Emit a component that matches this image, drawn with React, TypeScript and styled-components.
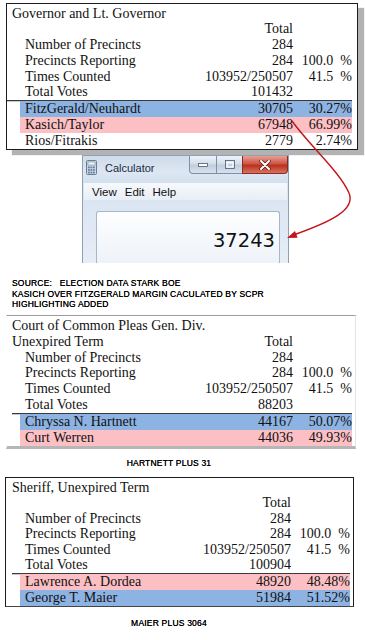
import styled, { createGlobalStyle } from "styled-components";

const GlobalStyle = createGlobalStyle`
  html, body {
    margin: 0;
    padding: 0;
    background: #fff;
  }
  body {
    font-family: "Liberation Serif", "Times New Roman", serif;
    color: #111;
  }
`;

const Page = styled.div`
  position: relative;
  width: 365px;
  display: flex;
  flex-direction: column;
  padding-top: 3px;
`;

type Look = "frame" | "open" | "thin";

const Box = styled.div<{ $look: Look }>`
  box-sizing: border-box;
  display: flex;
  flex-direction: column;
  ${(p) =>
    p.$look === "frame" &&
    `
    margin-left: 6px;
    width: 352px;
    border: 1px solid #1c1c1c;
    padding: 1.5px 5px 0 0;
    box-shadow: 6px 5px 1px #b3b3b3;
  `}
  ${(p) =>
    p.$look === "open" &&
    `
    margin: 5.5px 0 0 6px;
    width: 350px;
    border-top: 1px solid #9c9c9c;
    border-right: 1px solid #e4e4e4;
    border-left: 1px solid transparent;
    border-bottom: 3px solid #b6b6b6;
    padding: 2px 3px 0 0;
  `}
  ${(p) =>
    p.$look === "thin" &&
    `
    margin: 9px 0 0 5px;
    width: 349px;
    border: 1px solid #1c1c1c;
    border-bottom-color: #444;
    padding: 1.5px 3px 0 0;
  `}
`;

type Tone = "head" | "stat" | "blue" | "pink" | "plain";

const Row = styled.div<{ $tone: Tone; $ml: number; $h: number }>`
  display: grid;
  grid-template-columns: 1fr 100px 59px;
  margin-left: ${(p) => p.$ml}px;
  height: ${(p) => p.$h}px;
  line-height: ${(p) => p.$h}px;
  font-size: 14px;
  white-space: pre;
  background: ${(p) =>
    p.$tone === "blue" ? "#8db3e2" : p.$tone === "pink" ? "#fcbfc4" : "transparent"};
`;

const Label = styled.span<{ $head: boolean }>`
  padding-left: ${(p) => (p.$head ? 0 : 5)}px;
`;

const Num = styled.span`
  text-align: right;
`;

const Divider = styled.div<{ $ml: number }>`
  margin-left: ${(p) => p.$ml}px;
  height: 1px;
  background: #3a3a3a;
  box-shadow: 0 1px 0 #c8c8c8;
`;

const Caption = styled.div<{ $mt: number }>`
  margin-top: ${(p) => p.$mt}px;
  width: 338px;
  text-align: center;
  font-family: "Liberation Sans", Arial, sans-serif;
  font-size: 8.5px;
  letter-spacing: 0.2px;
  line-height: 10px;
  color: #000;
  text-shadow: 0 0 0.4px #000;
`;

const Note = styled.div`
  margin: 15px 0 0 12px;
  font-family: "Liberation Sans", Arial, sans-serif;
  font-size: 8.5px;
  letter-spacing: 0.2px;
  line-height: 10.5px;
  color: #000;
  text-shadow: 0 0 0.4px #000;
  white-space: pre;
`;

/* calculator screenshot */

const Window = styled.div`
  box-sizing: border-box;
  margin: 5px 0 0 82px;
  width: 207px;
  height: 108px;
  display: flex;
  flex-direction: column;
  border: 1px solid #8fa1b8;
  border-bottom: none;
  background: linear-gradient(#d6e2f0, #e2ebf6);
  font-family: "Liberation Sans", Arial, sans-serif;
`;

const TitleBar = styled.div`
  height: 27px;
  display: flex;
  align-items: flex-start;
  padding-left: 3px;
  background: linear-gradient(#cfdbea, #dde7f3 60%, #d3dfee);
`;

const AppIcon = styled.svg`
  margin-top: 4px;
`;

const WinTitle = styled.div`
  margin: 6px 0 0 8px;
  font-size: 11px;
  color: #1b2a44;
  flex: 1;
`;

const Controls = styled.div`
  display: flex;
`;

const CtlButton = styled.div<{ $w: number; $close?: boolean }>`
  box-sizing: border-box;
  width: ${(p) => p.$w}px;
  height: 18px;
  display: flex;
  align-items: center;
  justify-content: center;
  border: 1px solid ${(p) => (p.$close ? "#8a2b22" : "#7e8fa6")};
  border-top: none;
  margin-left: -1px;
  border-radius: ${(p) => (p.$close ? "0 0 4px 0" : "0")};
  background: ${(p) =>
    p.$close
      ? "linear-gradient(#e7a196, #cf5443 45%, #b8321f 55%, #d9725f)"
      : "linear-gradient(#eef3f9, #d4deea 45%, #c0cddd 55%, #d8e2ee)"};
  &:first-child {
    border-radius: 0 0 0 4px;
  }
`;

const MenuBar = styled.div`
  height: 17px;
  display: flex;
  align-items: center;
  gap: 8px;
  padding-left: 8px;
  margin: 0 1px;
  font-size: 11.5px;
  color: #111;
  background: linear-gradient(#f6f9fc, #e8eef6);
`;

const CalcBody = styled.div`
  flex: 1;
  display: flex;
  padding: 11px 8px 0 13px;
  background: linear-gradient(#dbe5f1, #e6eef7);
`;

const Display = styled.div`
  box-sizing: border-box;
  flex: 1;
  border: 1px solid #a8b6c9;
  border-bottom: none;
  border-radius: 3px 3px 0 0;
  background: linear-gradient(#fdfeff, #eef3f9);
  padding: 17px 4px 0 0;
  text-align: right;
  font-family: "DejaVu Sans", Verdana, sans-serif;
  font-size: 19.5px;
  line-height: 24px;
  color: #111;
`;

const Arrow = styled.svg`
  position: absolute;
  top: 0;
  left: 0;
  pointer-events: none;
`;

type Line = { label?: string; total?: string; pct?: string; tone: Tone };

const stats = (votes: string): Line[] => [
  { label: "Number of Precincts", total: "284", tone: "stat" },
  { label: "Precincts Reporting", total: "284", pct: "100.0  %", tone: "stat" },
  { label: "Times Counted", total: "103952/250507", pct: "41.5  %", tone: "stat" },
  { label: "Total Votes", total: votes, tone: "stat" },
];

const governor: Line[] = [
  { label: "Governor and Lt. Governor", tone: "head" },
  { total: "Total", tone: "stat" },
  ...stats("101432"),
];
const governorVotes: Line[] = [
  { label: "FitzGerald/Neuhardt", total: "30705", pct: "30.27%", tone: "blue" },
  { label: "Kasich/Taylor", total: "67948", pct: "66.99%", tone: "pink" },
  { label: "Rios/Fitrakis", total: "2779", pct: "2.74%", tone: "plain" },
];

const court: Line[] = [
  { label: "Court of Common Pleas Gen. Div.", tone: "head" },
  { label: "Unexpired Term", total: "Total", tone: "head" },
  ...stats("88203"),
];
const courtVotes: Line[] = [
  { label: "Chryssa N. Hartnett", total: "44167", pct: "50.07%", tone: "blue" },
  { label: "Curt Werren", total: "44036", pct: "49.93%", tone: "pink" },
];

const sheriff: Line[] = [
  { label: "Sheriff, Unexpired Term", tone: "head" },
  { total: "Total", tone: "stat" },
  ...stats("100904"),
];
const sheriffVotes: Line[] = [
  { label: "Lawrence A. Dordea", total: "48920", pct: "48.48%", tone: "pink" },
  { label: "George T. Maier", total: "51984", pct: "51.52%", tone: "blue" },
];

function Results({
  look,
  top,
  votes,
  headMl,
  rowMl,
  lineMl,
  pitch,
}: {
  look: Look;
  top: Line[];
  votes: Line[];
  headMl: number;
  rowMl: number;
  lineMl: number;
  pitch: number;
}) {
  const render = (l: Line, i: number, h: number) => (
    <Row key={i} $tone={l.tone} $ml={l.tone === "head" ? headMl : rowMl} $h={h}>
      <Label $head={l.tone === "head"}>{l.label}</Label>
      <Num>{l.total}</Num>
      <Num>{l.pct}</Num>
    </Row>
  );
  return (
    <Box $look={look}>
      {top.map((l, i) => render(l, i, pitch))}
      <Divider $ml={lineMl} />
      {votes.map((l, i) => render(l, i, 16))}
    </Box>
  );
}

function Calculator() {
  return (
    <Window>
      <TitleBar>
        <AppIcon width="11" height="15" viewBox="0 0 11 15">
          <rect x="0.5" y="0.5" width="10" height="14" rx="1" fill="#cdd6e1" stroke="#6c7d92" />
          <rect x="2" y="2" width="7" height="3" fill="#eef5fc" stroke="#7b8ca2" strokeWidth="0.6" />
          {[0, 1, 2].map((r) =>
            [0, 1, 2].map((c) => (
              <rect key={`${r}${c}`} x={2 + c * 2.5} y={6.5 + r * 2.6} width="1.8" height="1.7" fill="#5f7fa8" />
            ))
          )}
        </AppIcon>
        <WinTitle>Calculator</WinTitle>
        <Controls>
          <CtlButton $w={28}>
            <svg width="10" height="4" viewBox="0 0 10 4">
              <rect x="0.5" y="0.5" width="9" height="3" fill="#fff" stroke="#4a5a70" strokeWidth="0.8" />
            </svg>
          </CtlButton>
          <CtlButton $w={27}>
            <svg width="10" height="9" viewBox="0 0 10 9">
              <rect x="0.5" y="0.5" width="9" height="8" fill="none" stroke="#4a5a70" strokeWidth="0.8" />
              <rect x="2" y="2.5" width="6" height="4.5" fill="none" stroke="#fff" strokeWidth="1.2" />
            </svg>
          </CtlButton>
          <CtlButton $w={46} $close>
            <svg width="12" height="10" viewBox="0 0 12 10">
              <path d="M2 1 L10 9 M10 1 L2 9" stroke="#5b1a12" strokeWidth="3.4" strokeLinecap="round" />
              <path d="M2 1 L10 9 M10 1 L2 9" stroke="#fff" strokeWidth="2" strokeLinecap="round" />
            </svg>
          </CtlButton>
        </Controls>
      </TitleBar>
      <MenuBar>
        <span>View</span>
        <span>Edit</span>
        <span>Help</span>
      </MenuBar>
      <CalcBody>
        <Display>37243</Display>
      </CalcBody>
    </Window>
  );
}

export default function App() {
  return (
    <>
      <GlobalStyle />
      <Page>
        <Results look="frame" top={governor} votes={governorVotes} headMl={5} rowMl={13} lineMl={0} pitch={15.75} />
        <Calculator />
        <Note>
          {"SOURCE:   ELECTION DATA STARK BOE\nKASICH OVER FITZGERALD MARGIN CACULATED BY SCPR\nHIGHLIGHTING ADDED"}
        </Note>
        <Results look="open" top={court} votes={courtVotes} headMl={5} rowMl={13} lineMl={5} pitch={15.75} />
        <Caption $mt={9.5}>HARTNETT PLUS 31</Caption>
        <Results look="thin" top={sheriff} votes={sheriffVotes} headMl={6} rowMl={14} lineMl={6} pitch={15.6} />
        <Caption $mt={11}>MAIER PLUS 3064</Caption>
        <Arrow width="365" height="260" viewBox="0 0 365 260">
          <path
            d="M292 121 C310 146 340 172 349 193 C356 210 330 222 295 234.5"
            fill="none"
            stroke="#c3141c"
            strokeWidth="1.4"
          />
          <polygon points="287,238 297.6,237.7 295,231.1" fill="#c3141c" />
        </Arrow>
      </Page>
    </>
  );
}
